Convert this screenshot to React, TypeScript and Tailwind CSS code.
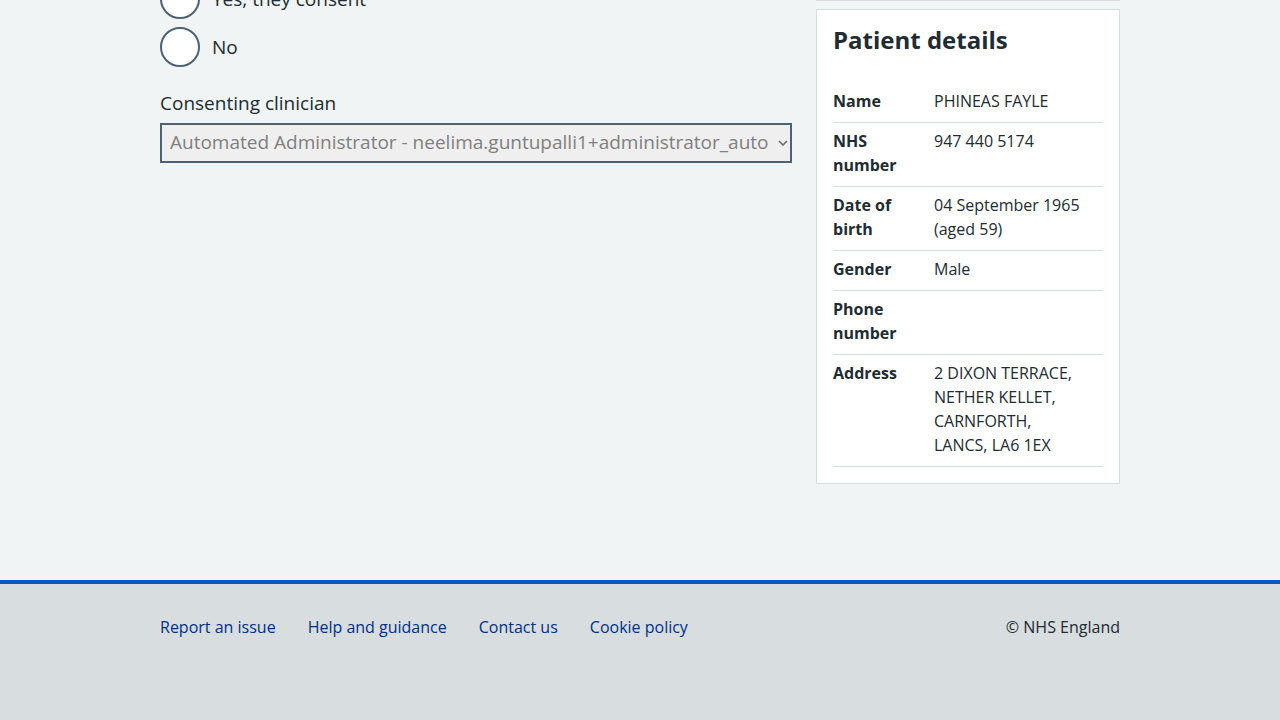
const rows: { key: string; value: React.ReactNode }[] = [
  { key: 'Name', value: 'PHINEAS FAYLE' },
  { key: 'NHS number', value: '947 440 5174' },
  {
    key: 'Date of birth',
    value: (
      <>
        04 September 1965
        <br />
        (aged 59)
      </>
    ),
  },
  { key: 'Gender', value: 'Male' },
  { key: 'Phone number', value: '' },
  {
    key: 'Address',
    value: (
      <>
        2 DIXON TERRACE,
        <br />
        NETHER KELLET,
        <br />
        CARNFORTH,
        <br />
        LANCS, LA6 1EX
      </>
    ),
  },
]

function Radio({ label }: { label: string }) {
  return (
    <div className="flex items-center">
      <span className="h-10 w-10 shrink-0 rounded-full border-2 border-[#4c6272] bg-white" />
      <span className="pl-3 text-[19px] leading-7">{label}</span>
    </div>
  )
}

export default function App() {
  return (
    <div className="flex min-h-screen flex-col bg-[#f0f4f5] font-['Open_Sans',Arial,sans-serif] text-[#212b32]">
      <main className="flex-1">
        <div className="mx-auto grid max-w-[960px] grid-cols-[632px_304px] gap-6">
          <div>
            <div className="-mt-[21px] flex flex-col gap-2">
              <Radio label="Yes, they consent" />
              <Radio label="No" />
            </div>
            <div className="mt-[22px]">
              <label className="block text-[19px] leading-7">Consenting clinician</label>
              <div className="mt-1.5 flex h-10 items-center overflow-hidden border-2 border-[#4c6272] bg-[#efefef] pl-2 pr-0.5">
                <span className="flex-1 overflow-hidden whitespace-nowrap pb-px text-[19px] text-[#808080]">
                  Automated Administrator - neelima.guntupalli1+administrator_automated@nhs.net
                </span>
                <svg width="10" height="6" viewBox="0 0 10 6" className="ml-2.5 shrink-0">
                  <path d="M1 1l4 4 4-4" fill="none" stroke="#6b6b6b" strokeWidth="1.6" />
                </svg>
              </div>
            </div>
          </div>

          <div>
            <div className="h-px bg-[#d8dde0]" />
            <div className="mt-2 border border-[#d8dde0] bg-white p-4">
              <h2 className="mb-[25px] pb-1 text-2xl font-bold leading-7">Patient details</h2>
              <dl>
                {rows.map((r) => (
                  <div key={r.key} className="grid grid-cols-[101px_1fr] border-b border-[#d8dde0] pt-1.5 pb-[9px] text-base leading-6">
                    <dt className="pr-4 font-bold">{r.key}</dt>
                    <dd>{r.value}</dd>
                  </div>
                ))}
              </dl>
            </div>
          </div>
        </div>
      </main>

      <footer className="border-t-4 border-[#005eb8] bg-[#d8dde0] pt-[31px] pb-[81px]">
        <div className="mx-auto flex max-w-[960px] items-center justify-between text-base leading-6">
          <ul className="flex gap-8 text-[#003087]">
            <li><a href="#">Report an issue</a></li>
            <li><a href="#">Help and guidance</a></li>
            <li><a href="#">Contact us</a></li>
            <li><a href="#">Cookie policy</a></li>
          </ul>
          <p>© NHS England</p>
        </div>
      </footer>
    </div>
  )
}
